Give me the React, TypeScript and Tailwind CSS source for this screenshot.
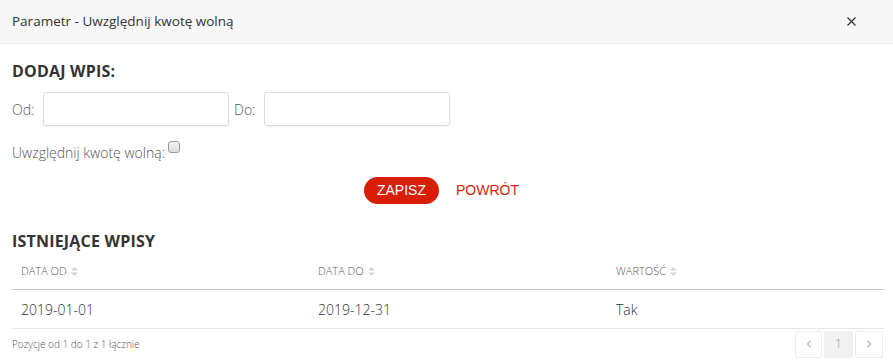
import React from 'react';

const SortIcon = () => (
  <svg width="7" height="9" viewBox="0 0 7 9" className="ml-1 inline-block" fill="#d6d6d6">
    <path d="M3.5 0L7 3.6H0z" />
    <path d="M3.5 9L0 5.4h7z" />
  </svg>
);

const Chevron = ({ dir }: { dir: 'left' | 'right' }) => (
  <svg width="6" height="8" viewBox="0 0 6 8" fill="none" stroke="#c4c4c4" strokeWidth="1.6">
    <path d={dir === 'left' ? 'M4.5 0.8L1.5 4l3 3.2' : 'M1.5 0.8L4.5 4l-3 3.2'} />
  </svg>
);

const rows = [{ from: '2019-01-01', to: '2019-12-31', value: 'Tak' }];

export default function App() {
  return (
    <div className="w-[893px] h-[363px] bg-white overflow-hidden text-[#333] font-['Open_Sans',sans-serif]">
      <div className="h-[44px] flex items-center justify-between px-3 bg-[#f7f7f7] border-b border-[#eeeeee]">
        <span className="text-[13.5px] text-[#333]">Parametr - Uwzględnij kwotę wolną</span>
        <button className="mr-[25px] text-[#333]">
          <svg width="9" height="9" viewBox="0 0 9 9" stroke="currentColor" strokeWidth="1.2">
            <path d="M0.5 0.5L8.5 8.5M8.5 0.5L0.5 8.5" />
          </svg>
        </button>
      </div>

      <div className="px-3">
        <h2 className="mt-[16px] text-[16px] font-bold tracking-[0.2px] text-[#333] leading-[22px]">DODAJ WPIS:</h2>

        <div className="mt-[10px] flex items-center font-light text-[14px] text-[#555]">
          <label className="w-[31px]">Od:</label>
          <input className="w-[186px] h-[34px] border border-[#dcdcdc] rounded-[3px] shadow-[0_1px_1px_rgba(0,0,0,0.05)]" />
          <label className="ml-[5px] w-[30px]">Do:</label>
          <input className="w-[186px] h-[34px] border border-[#dcdcdc] rounded-[3px] shadow-[0_1px_1px_rgba(0,0,0,0.05)]" />
        </div>

        <div className="mt-[12px] flex items-start font-light text-[14px] text-[#555] leading-[20px]">
          <span className="mt-[5px]">Uwzględnij kwotę wolną:</span>
          <span className="ml-[3px] mt-[3px] w-[12px] h-[12px] rounded-[3px] border border-[#9a9a9a] bg-gradient-to-b from-[#f4f4f4] to-[#dedede]" />
        </div>

        <div className="mt-[14px] flex items-center justify-center gap-[17px] pr-[10px]">
          <button className="h-[27px] px-[13px] rounded-full bg-[#d81e05] text-white text-[14px] font-['Liberation_Sans',sans-serif]">
            ZAPISZ
          </button>
          <button className="text-[#d81e05] text-[14px] font-['Liberation_Sans',sans-serif]">POWRÓT</button>
        </div>

        <h2 className="mt-[26px] text-[16px] font-bold tracking-[0.2px] text-[#333] leading-[22px]">ISTNIEJĄCE WPISY</h2>

        <div className="w-[872px] mt-[4px]">
          <div className="grid grid-cols-[297px_298px_1fr] h-[34px] pb-[2px] items-center border-b border-[#c8c8c8] text-[11px] font-light text-[#555]">
            <div className="pl-[9px] flex items-center">DATA OD<SortIcon /></div>
            <div className="pl-[9px] flex items-center">DATA DO<SortIcon /></div>
            <div className="pl-[9px] flex items-center">WARTOŚĆ<SortIcon /></div>
          </div>
          {rows.map((r) => (
            <div key={r.from} className="grid grid-cols-[297px_298px_1fr] h-[39px] items-center border-b border-[#e6e6e6] text-[14px] font-light text-[#333]">
              <div className="pl-[9px]">{r.from}</div>
              <div className="pl-[9px]">{r.to}</div>
              <div className="pl-[9px]">{r.value}</div>
            </div>
          ))}
          <div className="flex items-center justify-between h-[30px]">
            <span className="text-[10px] font-light text-[#555]">Pozycje od 1 do 1 z 1 łącznie</span>
            <div className="flex gap-[2px] mr-[1px]">
              <span className="w-[27px] h-[27px] flex items-center justify-center border border-[#ececec] rounded-[2px]">
                <Chevron dir="left" />
              </span>
              <span className="w-[29px] h-[27px] flex items-center justify-center bg-[#f1f1f1] border border-[#f1f1f1] rounded-[2px] text-[#999] text-[12px] font-light">1</span>
              <span className="w-[28px] h-[27px] flex items-center justify-center border border-[#ececec] rounded-[2px]">
                <Chevron dir="right" />
              </span>
            </div>
          </div>
        </div>
      </div>
    </div>
  );
}
